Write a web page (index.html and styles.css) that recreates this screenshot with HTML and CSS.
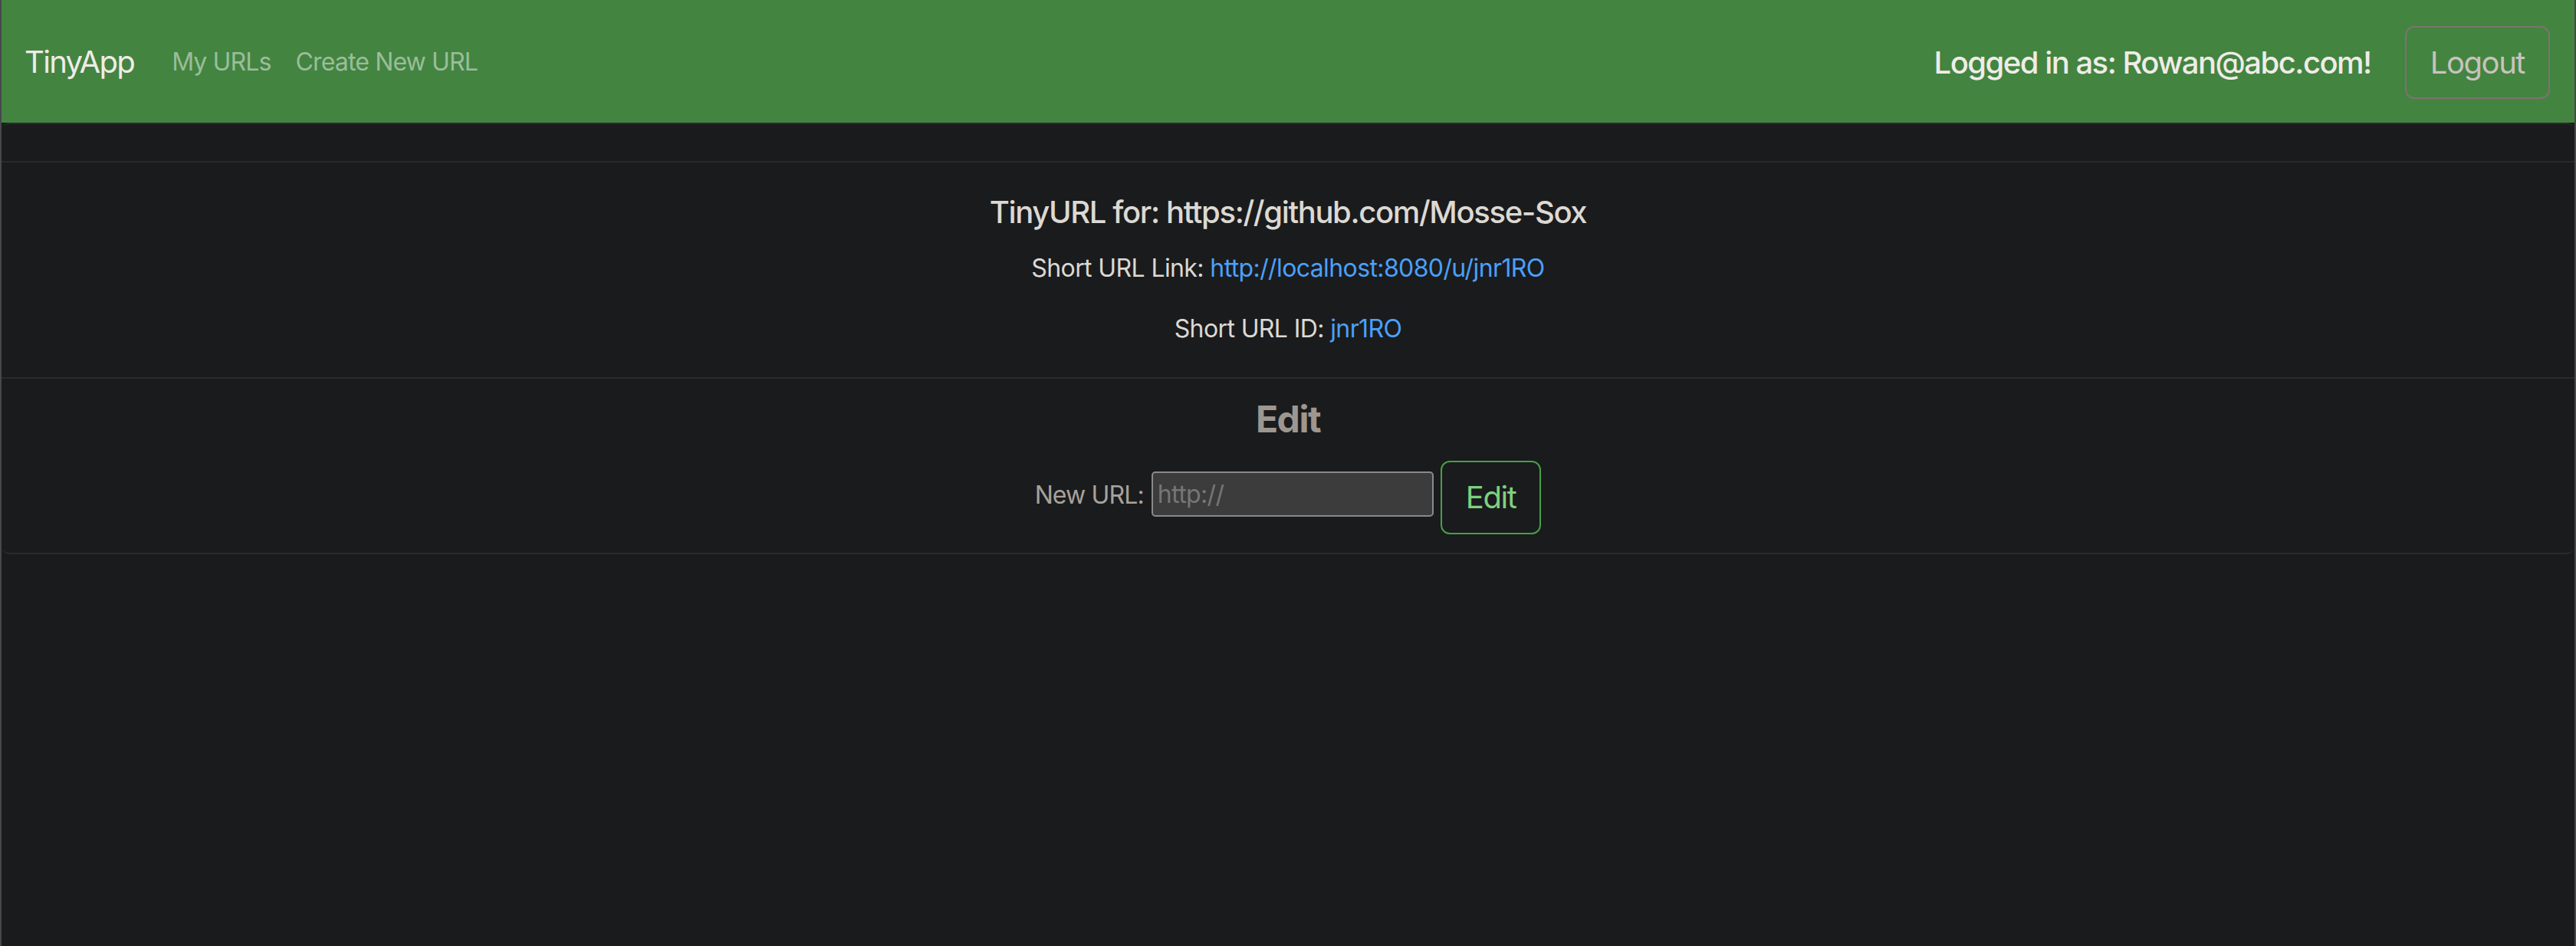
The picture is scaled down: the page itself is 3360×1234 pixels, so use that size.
FILE: index.html
```html
<!DOCTYPE html>
<html lang="en">
<head>
<meta charset="utf-8">
<title>TinyApp</title>
<link rel="stylesheet" href="styles.css">
</head>
<body>
<div class="page">
  <nav class="navbar">
    <div class="nav-left">
      <a class="brand" href="#">TinyApp</a>
      <a class="nav-link" href="#">My URLs</a>
      <a class="nav-link" href="#">Create New URL</a>
    </div>
    <div class="nav-right">
      <span class="logged">Logged in as: Rowan@abc.com!</span>
      <button class="btn btn-logout" type="button">Logout</button>
    </div>
  </nav>
  <div class="card">
    <div class="card-header"></div>
    <div class="card-body">
      <h5 class="card-title">TinyURL for: https://github.com/Mosse-Sox</h5>
      <p class="card-text">Short URL Link: <a class="link" href="#">http://localhost:8080/u/jnr1RO</a></p>
      <p class="card-text">Short URL ID: <a class="link" href="#">jnr1RO</a></p>
    </div>
    <div class="card-footer">
      <h4 class="edit-title">Edit</h4>
      <form class="edit-form">
        <label class="edit-label" for="newurl">New URL:</label>
        <input class="edit-input" id="newurl" type="text" placeholder="http://">
        <button class="btn btn-edit" type="button">Edit</button>
      </form>
    </div>
  </div>
</div>
</body>
</html>
```

FILE: styles.css
```css
* { box-sizing: border-box; }

html, body {
  margin: 0;
  padding: 0;
  background: #1a1b1d;
}

body {
  font-family: Inter, "Noto Sans", "Liberation Sans", sans-serif;
  color: #dcd9d3;
}

.page {
  min-height: 1234px;
  border-left: 2px solid rgba(255, 255, 255, 0.2);
  border-right: 2px solid rgba(255, 255, 255, 0.2);
}

.navbar {
  height: 160px;
  background: #438441;
  display: flex;
  align-items: center;
  justify-content: space-between;
  padding: 2px 32px 0 30px;
}

.nav-left {
  display: flex;
  align-items: center;
}

.brand {
  font-size: 40px;
  line-height: 1.5;
  letter-spacing: -0.042em;
  color: #efece7;
  text-decoration: none;
  margin-right: 33px;
}

.nav-link {
  font-size: 32px;
  line-height: 1.5;
  letter-spacing: -0.027em;
  color: rgba(255, 255, 255, 0.48);
  text-decoration: none;
  padding: 0 16px;
}

.nav-right {
  display: flex;
  align-items: center;
  gap: 44px;
}

.logged {
  font-size: 40px;
  font-weight: 500;
  letter-spacing: -0.038em;
  color: #efece7;
}

.btn {
  font-family: inherit;
  background: transparent;
  cursor: pointer;
}

.btn-logout {
  font-size: 40px;
  line-height: 59px;
  letter-spacing: -0.036em;
  padding: 16px 31px;
  border: 2px solid #7c746e;
  border-radius: 12px;
  color: #c8c3bd;
}

.card {
  border-top: 2px solid #2a2b2d;
  border-bottom: 2px solid #2a2b2d;
  border-radius: 10px;
}

.card-header {
  height: 50px;
  border-bottom: 2px solid #2a2b2d;
}

.card-body {
  text-align: center;
  padding: 41px 32px 8px;
}

.card-title {
  font-size: 40px;
  font-weight: 500;
  line-height: 48px;
  letter-spacing: -0.034em;
  margin: 0 0 25px;
  color: #dcd9d3;
}

.card-text {
  font-size: 32px;
  line-height: 48px;
  letter-spacing: -0.019em;
  margin: 0 0 31px;
  color: #dcd9d3;
}

.link {
  color: #4ba0fa;
  text-decoration: none;
}

.card-footer {
  border-top: 2px solid #2a2b2d;
  text-align: center;
  padding: 24px 32px 24px;
}

.edit-title {
  font-size: 48px;
  font-weight: 700;
  line-height: 57.6px;
  letter-spacing: -0.03em;
  margin: 0 0 25px;
  color: #9d978f;
}

.edit-form {
  display: flex;
  justify-content: center;
  align-items: flex-start;
}

.edit-label {
  font-size: 32px;
  line-height: 48px;
  letter-spacing: -0.027em;
  color: #a8a29a;
  margin-top: 21px;
  margin-right: 10px;
}

.edit-input {
  width: 368px;
  height: 59px;
  margin-top: 14px;
  margin-right: 9px;
  padding: 0 6px;
  font-family: inherit;
  font-size: 32px;
  letter-spacing: -0.02em;
  color: #dddddd;
  background: #3c3c3c;
  border: 2px solid #8a8a8a;
  border-radius: 5px;
  outline: none;
}

.edit-input::placeholder {
  color: #767676;
}

.btn-edit {
  font-size: 40px;
  line-height: 60px;
  letter-spacing: -0.036em;
  padding: 16px 31px;
  border: 2px solid #47a047;
  border-radius: 12px;
  color: #7fd17f;
}
```
